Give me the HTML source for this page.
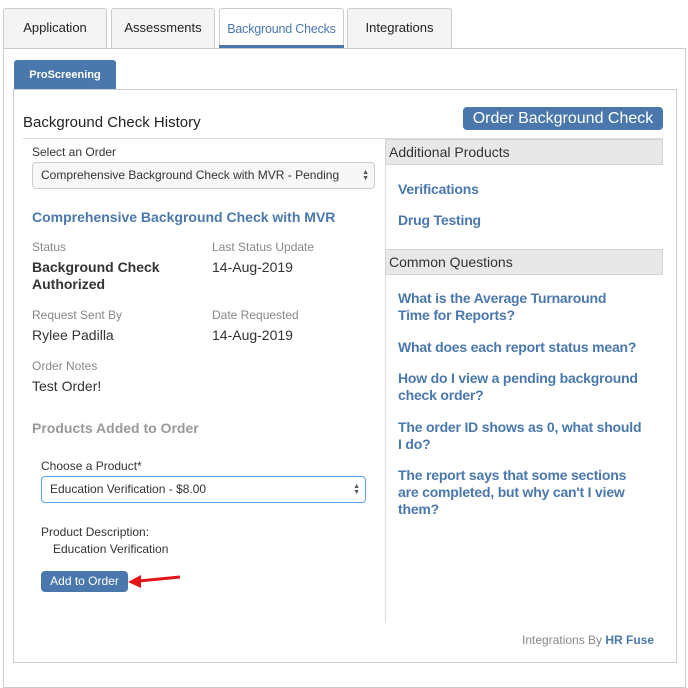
<!DOCTYPE html>
<html><head><meta charset="utf-8"><style>
*{margin:0;padding:0;box-sizing:border-box}
body{width:688px;height:671px;background:#fff;font-family:"Liberation Sans",sans-serif;position:relative;overflow:hidden;color:#333}
.a{position:absolute;white-space:nowrap}
.tab{position:absolute;top:8px;height:40px;border:1px solid #ccc;border-bottom:none;background:#f4f4f4;border-radius:3px 3px 0 0;font-size:13px;color:#222;text-align:center;line-height:38px}
.lbl{font-size:12px;color:#888}
.val{font-size:14px;color:#333}
.b{font-weight:bold}
.lnk{font-size:14px;color:#4a78ad;font-weight:bold;line-height:17px;white-space:normal;width:245px;letter-spacing:-0.2px}
.gh{position:absolute;left:385px;width:278px;height:26px;background:#e8e8e8;border:1px solid #d4d4d4;font-size:14px;color:#333;padding-left:3px;line-height:25px}
.sel{position:absolute;border:1px solid #ccc;border-radius:4px;background:#f7f7f7;font-size:12px;color:#333;padding-left:8px}
.arr{position:absolute;right:5px;font-size:7px;line-height:6px;color:#555}
</style></head><body>
<div class="tab" style="left:3px;width:104px">Application</div>
<div class="tab" style="left:111px;width:104px">Assessments</div>
<div class="tab" style="left:219px;width:125px;background:#fff;color:#4a78ad;line-height:40px;font-size:12.5px;letter-spacing:-0.2px">Background Checks</div>
<div class="tab" style="left:347px;width:105px">Integrations</div>
<div style="position:absolute;left:3px;top:48px;width:683px;height:640px;border:1px solid #ccc"></div>
<div style="position:absolute;left:219px;top:45px;width:125px;height:3px;background:#4a78ad"></div>
<div style="position:absolute;left:14px;top:60px;width:102px;height:30px;background:#4a78ad;border-radius:3px 3px 0 0;color:#fff;font-size:11px;font-weight:bold;text-align:center;line-height:30px">ProScreening</div>
<div style="position:absolute;left:13px;top:89px;width:664px;height:574px;border:1px solid #ccc"></div>
<div class="a" style="left:23px;top:114px;font-size:15px;color:#222">Background Check History</div>
<div style="position:absolute;left:463px;top:107px;width:200px;height:23px;background:#4a78ad;border-radius:4px;color:#fff;font-size:16px;text-align:center;line-height:23px">Order Background Check</div>
<div style="position:absolute;left:23px;top:138px;width:640px;height:1px;background:#ddd"></div>
<div style="position:absolute;left:385px;top:139px;width:1px;height:484px;background:#ddd"></div>
<div class="a lbl" style="left:32px;top:145px;color:#333">Select an Order</div>
<div class="sel" style="left:32px;top:162px;width:343px;height:27px;line-height:25px">Comprehensive Background Check with MVR - Pending<span class="arr" style="top:7px">▲<br>▼</span></div>
<div class="a b" style="left:32px;top:209px;font-size:14px;color:#4a78ad">Comprehensive Background Check with MVR</div>
<div class="a lbl" style="left:32px;top:240px">Status</div>
<div class="a lbl" style="left:212px;top:240px">Last Status Update</div>
<div class="a val b" style="left:32px;top:259px;line-height:17px">Background Check<br>Authorized</div>
<div class="a val" style="left:212px;top:259px">14-Aug-2019</div>
<div class="a lbl" style="left:32px;top:308px">Request Sent By</div>
<div class="a lbl" style="left:212px;top:308px">Date Requested</div>
<div class="a val" style="left:32px;top:327px">Rylee Padilla</div>
<div class="a val" style="left:212px;top:327px">14-Aug-2019</div>
<div class="a lbl" style="left:32px;top:359px">Order Notes</div>
<div class="a val" style="left:32px;top:378px">Test Order!</div>
<div class="a b" style="left:32px;top:420px;font-size:14px;color:#999">Products Added to Order</div>
<div class="a" style="left:41px;top:459px;font-size:12px;color:#333">Choose a Product*</div>
<div class="sel" style="left:41px;top:476px;width:325px;height:27px;line-height:25px;background:#fff;border-color:#5aa0e6">Education Verification - $8.00<span class="arr" style="top:7px">▲<br>▼</span></div>
<div class="a" style="left:41px;top:525px;font-size:12px;color:#333">Product Description:</div>
<div class="a" style="left:53px;top:542px;font-size:12px;color:#333">Education Verification</div>
<div style="position:absolute;left:41px;top:571px;width:87px;height:21px;background:#4a78ad;border-radius:4px;color:#fff;font-size:12px;text-align:center;line-height:21px">Add to Order</div>
<svg style="position:absolute;left:125px;top:572px" width="60" height="20"><line x1="55" y1="5" x2="14" y2="9" stroke="#e3151a" stroke-width="3"/><polygon points="3,10 16,3 16,16" fill="#e3151a"/></svg>
<div class="gh" style="top:139px">Additional Products</div>
<div class="a lnk" style="left:398px;top:181px">Verifications</div>
<div class="a lnk" style="left:398px;top:212px">Drug Testing</div>
<div class="gh" style="top:249px">Common Questions</div>
<div class="a lnk" style="left:398px;top:290px">What is the Average Turnaround<br>Time for Reports?</div>
<div class="a lnk" style="left:398px;top:339px;width:260px">What does each report status mean?</div>
<div class="a lnk" style="left:398px;top:370px">How do I view a pending background<br>check order?</div>
<div class="a lnk" style="left:398px;top:419px;width:260px">The order ID shows as 0, what should<br>I do?</div>
<div class="a lnk" style="left:398px;top:467px;width:260px">The report says that some sections<br>are completed, but why can't I view<br>them?</div>
<div class="a" style="left:522px;top:633px;font-size:12px;color:#888">Integrations By <b style="color:#4a78ad">HR Fuse</b></div>
</body></html>
